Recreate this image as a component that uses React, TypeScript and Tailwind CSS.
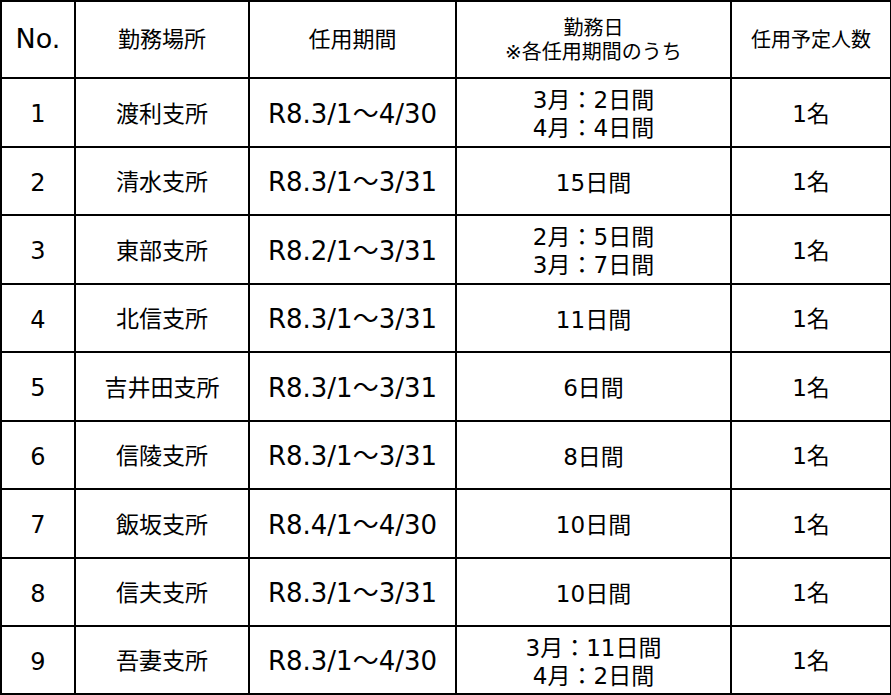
import React from "react";

type Row = {
  no: string;
  place: string;
  period: string;
  days: string[];
  count: string;
};

const rows: Row[] = [
  { no: "1", place: "渡利支所", period: "R8.3/1～4/30", days: ["3月：2日間", "4月：4日間"], count: "1名" },
  { no: "2", place: "清水支所", period: "R8.3/1～3/31", days: ["15日間"], count: "1名" },
  { no: "3", place: "東部支所", period: "R8.2/1～3/31", days: ["2月：5日間", "3月：7日間"], count: "1名" },
  { no: "4", place: "北信支所", period: "R8.3/1～3/31", days: ["11日間"], count: "1名" },
  { no: "5", place: "吉井田支所", period: "R8.3/1～3/31", days: ["6日間"], count: "1名" },
  { no: "6", place: "信陵支所", period: "R8.3/1～3/31", days: ["8日間"], count: "1名" },
  { no: "7", place: "飯坂支所", period: "R8.4/1～4/30", days: ["10日間"], count: "1名" },
  { no: "8", place: "信夫支所", period: "R8.3/1～3/31", days: ["10日間"], count: "1名" },
  { no: "9", place: "吾妻支所", period: "R8.3/1～4/30", days: ["3月：11日間", "4月：2日間"], count: "1名" },
];

// 行の高さ（スクショに合わせて 69/68 を交互に）
const rowHeights = ["h-[69px]", "h-[68px]", "h-[69px]", "h-[68px]", "h-[69px]", "h-[68px]", "h-[69px]", "h-[68px]", "h-[68px]"];

const cell = "border-2 border-black text-center align-middle p-0";

export default function App() {
  return (
    <div className="w-[891px] h-[695px] bg-white text-black font-['DejaVu_Sans','Noto_Sans_CJK_JP',sans-serif]">
      <table className="w-[890px] border-collapse table-fixed">
        <colgroup>
          <col className="w-[74px]" />
          <col className="w-[174px]" />
          <col className="w-[207px]" />
          <col className="w-[275px]" />
          <col className="w-[160px]" />
        </colgroup>
        <thead>
          <tr className="h-[77px]">
            <th className={`${cell} font-normal text-[27px]`}>No.</th>
            <th className={`${cell} font-normal text-[22px]`}>勤務場所</th>
            <th className={`${cell} font-normal text-[22px]`}>任用期間</th>
            <th className={`${cell} font-normal text-[20px] leading-[24px]`}>
              <div>勤務日</div>
              <div>※各任用期間のうち</div>
            </th>
            <th className={`${cell} font-normal text-[20px]`}>任用予定人数</th>
          </tr>
        </thead>
        <tbody>
          {rows.map((r, i) => (
            <tr key={r.no} className={rowHeights[i]}>
              <td className={`${cell} text-[24px] pt-[3px]`}>{r.no}</td>
              <td className={`${cell} text-[23px] pt-[3px]`}>{r.place}</td>
              <td className={`${cell} text-[26px] pt-[3px]`}>{r.period}</td>
              <td className={`${cell} text-[23px] leading-[28px] pt-[3px]`}>
                {r.days.map((d) => (
                  <div key={d}>{d}</div>
                ))}
              </td>
              <td className={`${cell} text-[23px] pt-[3px]`}>{r.count}</td>
            </tr>
          ))}
        </tbody>
      </table>
    </div>
  );
}
